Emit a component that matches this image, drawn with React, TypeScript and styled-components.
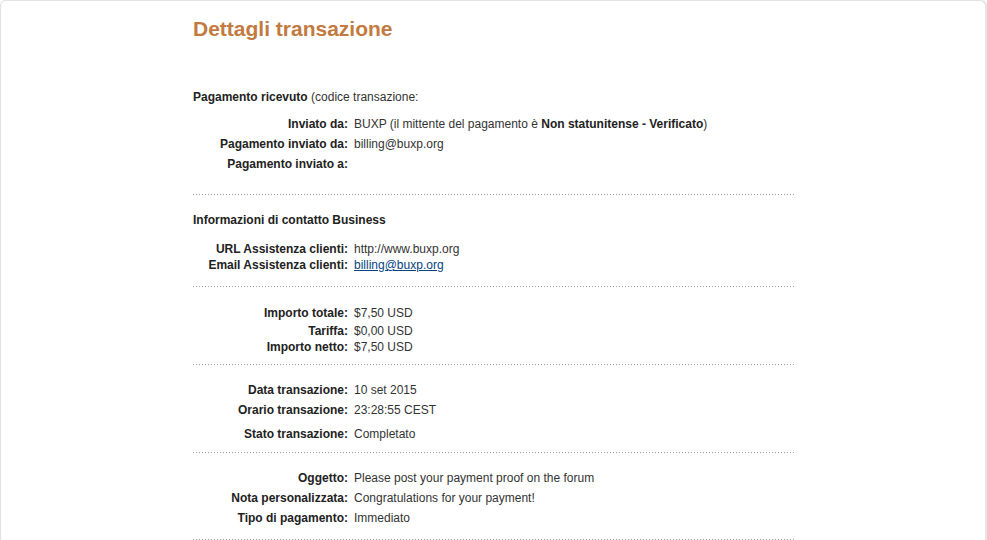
import React from 'react';
import styled, { createGlobalStyle } from 'styled-components';

const GlobalStyle = createGlobalStyle`
  html, body {
    margin: 0;
    padding: 0;
    background: #fff;
  }
  body {
    font-family: 'Liberation Sans', Arial, sans-serif;
    font-size: 12px;
    color: #333;
  }
`;

// Scheda bianca con angoli arrotondati
const Card = styled.div`
  width: 984px;
  min-height: 560px;
  border: 1px solid #e2e2e2;
  border-bottom: none;
  border-radius: 6px 6px 0 0;
  box-shadow: 1px 0 2px rgba(0, 0, 0, 0.12);
  background: #fff;
`;

const Content = styled.div`
  width: 602px;
  margin-left: 192px;
  padding-top: 16px;
`;

const Title = styled.h1`
  margin: 0;
  font-size: 21px;
  line-height: 24px;
  font-weight: bold;
  color: #c27a40;
`;

const Heading = styled.div<{ $top: number }>`
  margin-top: ${p => p.$top}px;
  line-height: 16px;
  color: #333;
`;

const Row = styled.div<{ $top: number }>`
  display: flex;
  gap: 6px;
  margin-top: ${p => p.$top}px;
  line-height: 16px;
`;

const Label = styled.div`
  width: 155px;
  flex: none;
  text-align: right;
  font-weight: bold;
  color: #222;
`;

const Value = styled.div`
  color: #333;
`;

const Strong = styled.b`
  color: #222;
`;

const MailLink = styled.a`
  color: #084482;
  text-decoration: underline;
`;

const Divider = styled.div<{ $top: number }>`
  height: 1px;
  margin-top: ${p => p.$top}px;
  background: repeating-linear-gradient(to right, #9a9a9a 0 1px, transparent 1px 3px);
`;

type Item = { label: string; value: React.ReactNode; top: number };

const Rows: React.FC<{ items: Item[] }> = ({ items }) => (
  <>
    {items.map(item => (
      <Row key={item.label} $top={item.top}>
        <Label>{item.label}</Label>
        <Value>{item.value}</Value>
      </Row>
    ))}
  </>
);

const App: React.FC = () => {
  return (
    <>
      <GlobalStyle />
      <Card>
        <Content>
          <Title>Dettagli transazione</Title>

          <Heading $top={48}>
            <Strong>Pagamento ricevuto</Strong> (codice transazione:
          </Heading>
          <Rows
            items={[
              {
                label: 'Inviato da:',
                value: (
                  <>
                    BUXP (il mittente del pagamento è <Strong>Non statunitense - Verificato</Strong>)
                  </>
                ),
                top: 11,
              },
              { label: 'Pagamento inviato da:', value: 'billing@buxp.org', top: 4 },
              { label: 'Pagamento inviato a:', value: '', top: 4 },
            ]}
          />
          <Divider $top={22} />

          <Heading $top={17}>
            <Strong>Informazioni di contatto Business</Strong>
          </Heading>
          <Rows
            items={[
              { label: 'URL Assistenza clienti:', value: 'http://www.buxp.org', top: 13 },
              {
                label: 'Email Assistenza clienti:',
                value: <MailLink href="#">billing@buxp.org</MailLink>,
                top: 0,
              },
            ]}
          />
          <Divider $top={13} />

          <Rows
            items={[
              { label: 'Importo totale:', value: '$7,50 USD', top: 18 },
              { label: 'Tariffa:', value: '$0,00 USD', top: 2 },
              { label: 'Importo netto:', value: '$7,50 USD', top: 0 },
            ]}
          />
          <Divider $top={9} />

          <Rows
            items={[
              { label: 'Data transazione:', value: '10 set 2015', top: 17 },
              { label: 'Orario transazione:', value: '23:28:55 CEST', top: 4 },
              { label: 'Stato transazione:', value: 'Completato', top: 8 },
            ]}
          />
          <Divider $top={10} />

          <Rows
            items={[
              { label: 'Oggetto:', value: 'Please post your payment proof on the forum', top: 17 },
              { label: 'Nota personalizzata:', value: 'Congratulations for your payment!', top: 4 },
              { label: 'Tipo di pagamento:', value: 'Immediato', top: 4 },
            ]}
          />
          <Divider $top={13} />
        </Content>
      </Card>
    </>
  );
};

export default App;
